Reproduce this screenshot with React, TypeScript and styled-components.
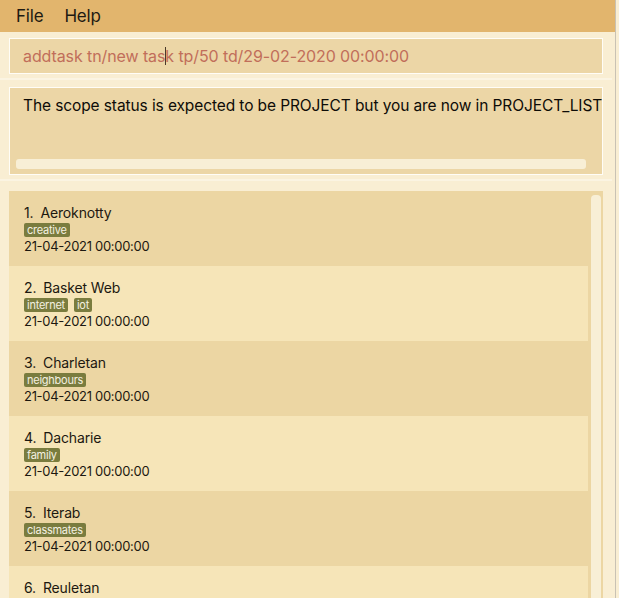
import React from "react";
import styled, { createGlobalStyle } from "styled-components";

const Global = createGlobalStyle`
  html, body { margin: 0; padding: 0; background: #f9eed3; }
  body { font-family: "Inter", "Noto Sans", sans-serif; overflow: hidden; }
  * { box-sizing: border-box; }
`;

const Window = styled.div`
  width: 616px;
  height: 598px;
  background: #f9eed3;
  border-right: 1px solid #c9c2b4;
  display: flex;
  flex-direction: column;
  overflow: hidden;
`;

const MenuBar = styled.div`
  height: 32px;
  background: #e2b56d;
  display: flex;
  align-items: center;
  padding-left: 16px;
  gap: 21px;
  flex-shrink: 0;
`;

const MenuItem = styled.span`
  font-size: 17px;
  color: #1e1a12;
  letter-spacing: -0.2px;
`;

const Pane = styled.div<{ $top: number; $bottom: number }>`
  padding: ${(p) => p.$top}px 12px ${(p) => p.$bottom}px 9px;
  flex-shrink: 0;
`;

const Divider = styled.div`
  height: 2px;
  background: #fbf4e2;
  flex-shrink: 0;
  margin-right: 3px;
`;

const CommandBox = styled.div`
  height: 36px;
  border: 1px solid #fffdf7;
  background: #ecd6a6;
  display: flex;
  align-items: center;
  padding-left: 13px;
  font-size: 16px;
  letter-spacing: -0.1px;
  color: #c16e5a;
  white-space: nowrap;
`;

const Caret = styled.span`
  display: inline-block;
  width: 1px;
  height: 18px;
  background: #4a3a2a;
  vertical-align: -3px;
  margin: 0 -1px 0 0;
`;

const ResultBox = styled.div`
  height: 88px;
  border: 1px solid #fffdf7;
  background: #ecd6a6;
  display: flex;
  flex-direction: column;
  overflow: hidden;
`;

const ResultText = styled.div`
  padding: 8px 0 0 13px;
  font-size: 15.5px;
  color: #0e0c08;
  white-space: nowrap;
  flex: 1;
  letter-spacing: -0.1px;
`;

const HScroll = styled.div`
  height: 10px;
  margin: 0 16px 5px 6px;
  border-radius: 3px;
  background: #f8efd6;
`;

const ListPane = styled.div`
  flex: 1;
  padding: 10px 12px 0 9px;
  min-height: 0;
`;

const ListBox = styled.div`
  height: 100%;
  background: #ecd6a3;
  display: flex;
  overflow: hidden;
`;

const Items = styled.div`
  flex: 1;
  display: flex;
  flex-direction: column;
`;

const Item = styled.div<{ $odd: boolean }>`
  height: 75px;
  flex-shrink: 0;
  background: ${(p) => (p.$odd ? "#ecd6a3" : "#f6e5b8")};
  padding: 13px 0 0 15px;
  display: flex;
  flex-direction: column;
`;

const Title = styled.div`
  font-size: 14px;
  color: #1c1810;
  line-height: 17px;
  letter-spacing: -0.15px;
  display: flex;
  gap: 7px;
`;

const Tags = styled.div`
  display: flex;
  gap: 6px;
  margin-top: 2px;
`;

const Tag = styled.span`
  background: #7a7c3e;
  color: #f4f0e0;
  font-size: 11px;
  line-height: 14px;
  letter-spacing: -0.25px;
  padding: 0 3px;
  border-radius: 2px;
`;

const DateText = styled.div`
  font-size: 13px;
  color: #1c1810;
  line-height: 16px;
  margin-top: 1px;
  letter-spacing: -0.3px;
`;

const VScroll = styled.div`
  width: 15px;
  flex-shrink: 0;
  padding: 4px 2px 0 3px;
`;

const Thumb = styled.div`
  height: 100%;
  background: #f8efd6;
  border-radius: 4px 4px 0 0;
`;

const items = [
  { name: "Aeroknotty", tags: ["creative"] },
  { name: "Basket Web", tags: ["internet", "iot"] },
  { name: "Charletan", tags: ["neighbours"] },
  { name: "Dacharie", tags: ["family"] },
  { name: "Iterab", tags: ["classmates"] },
  { name: "Reuletan", tags: ["colleagues"] },
];

export default function App() {
  return (
    <>
      <Global />
      <Window>
        <MenuBar>
          <MenuItem>File</MenuItem>
          <MenuItem>Help</MenuItem>
        </MenuBar>
        <Pane $top={6} $bottom={4}>
          <CommandBox>
            addtask tn/new tas<Caret />k tp/50 td/29-02-2020 00:00:00
          </CommandBox>
        </Pane>
        <Divider />
        <Pane $top={7} $bottom={4}>
          <ResultBox>
            <ResultText>
              The scope status is expected to be PROJECT but you are now in PROJECT_LIST
            </ResultText>
            <HScroll />
          </ResultBox>
        </Pane>
        <Divider />
        <ListPane>
          <ListBox>
            <Items>
              {items.map((it, i) => (
                <Item key={it.name} $odd={i % 2 === 0}>
                  <Title>
                    <span>{i + 1}.</span>
                    <span>{it.name}</span>
                  </Title>
                  <Tags>
                    {it.tags.map((t) => (
                      <Tag key={t}>{t}</Tag>
                    ))}
                  </Tags>
                  <DateText>21-04-2021 00:00:00</DateText>
                </Item>
              ))}
            </Items>
            <VScroll>
              <Thumb />
            </VScroll>
          </ListBox>
        </ListPane>
      </Window>
    </>
  );
}
